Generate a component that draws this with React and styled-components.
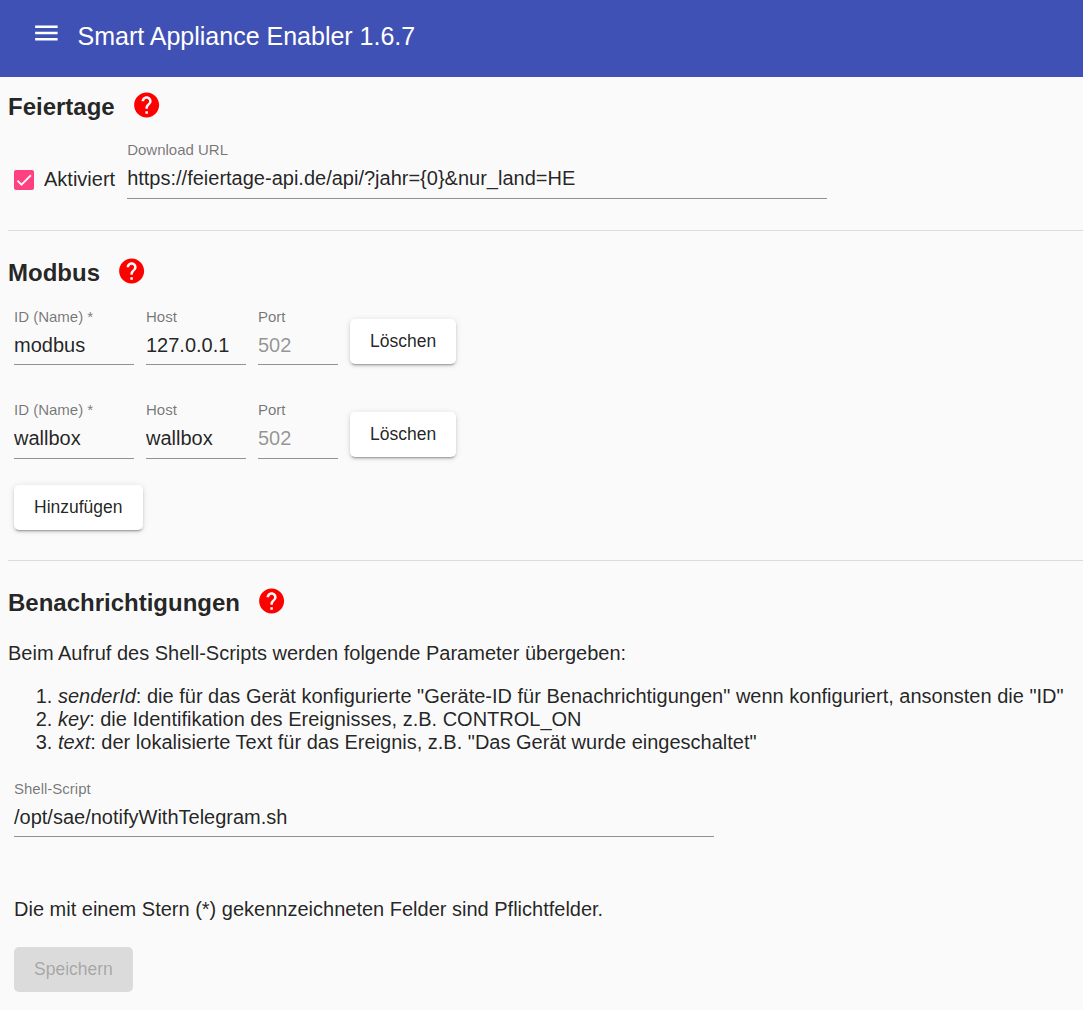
import React from 'react';
import styled, { createGlobalStyle } from 'styled-components';

const GlobalStyle = createGlobalStyle`
  *, *::before, *::after { box-sizing: border-box; }
  html, body { margin: 0; background: #fafafa; }
  body {
    overflow: hidden;
    color: rgba(0, 0, 0, 0.87);
    font-family: "Liberation Sans", Arial, sans-serif;
    font-size: 20px;
    line-height: 23px;
  }
`;

const Toolbar = styled.header`
  display: flex;
  align-items: flex-start;
  height: 77px;
  padding: 18px 31px 0;
  background: #3f51b5;
  color: #fff;
`;

const MenuButton = styled.button`
  display: flex;
  padding: 0;
  border: 0;
  background: none;
  color: inherit;
`;

const Title = styled.h1`
  margin: 4px 0 0 16.5px;
  font-size: 25px;
  font-weight: 400;
  line-height: 28px;
`;

const Section = styled.section`
  display: flex;
  flex-direction: column;
  align-items: flex-start;
  margin-left: 8px;
  height: ${(p) => p.$height}px;
  padding-top: ${(p) => p.$top}px;
  border-bottom: ${(p) => (p.$last ? 0 : 1)}px solid rgba(0, 0, 0, 0.12);
`;

const HeadingRow = styled.div`
  display: flex;
  align-items: flex-start;
  gap: 17px;
  height: 40px;
`;

const Heading = styled.h2`
  margin: 0;
  font-size: 24px;
  font-weight: 700;
  line-height: 40px;
`;

const HelpSvg = styled.svg`
  margin-top: 3px;
  fill: #f00;
`;

const Row = styled.div`
  display: flex;
  align-items: flex-start;
  gap: 12px;
  margin: ${(p) => p.$top}px 0 0 6px;
`;

const CheckboxLabel = styled.label`
  display: flex;
  align-items: center;
  gap: 10px;
  margin-top: 27px;
`;

const CheckboxBox = styled.span`
  display: flex;
  width: 20px;
  height: 20px;
  margin-top: 1px;
  border-radius: 2px;
  background: #ff4081;
`;

const Field = styled.label`
  display: flex;
  flex-direction: column;
  width: ${(p) => p.$width}px;
  padding-bottom: ${(p) => p.$pad}px;
  border-bottom: 1px solid rgba(0, 0, 0, 0.42);
`;

const FieldLabel = styled.span`
  margin-bottom: 9px;
  color: rgba(0, 0, 0, 0.54);
  font-size: 15px;
  line-height: 17px;
`;

const Input = styled.input`
  width: 100%;
  height: 23px;
  padding: 0;
  border: 0;
  outline: 0;
  background: none;
  color: inherit;
  font: inherit;
  &::placeholder { color: rgba(0, 0, 0, 0.42); opacity: 1; }
`;

const Button = styled.button`
  height: 45px;
  margin-top: ${(p) => p.$top || 0}px;
  padding: 0 20px;
  border: 0;
  border-radius: 5px;
  background: #fff;
  color: rgba(0, 0, 0, 0.87);
  font-family: inherit;
  font-size: 17.5px;
  line-height: 45px;
  box-shadow:
    0 3px 1.25px -2px rgba(0, 0, 0, 0.2),
    0 2px 2.5px 0 rgba(0, 0, 0, 0.14),
    0 1px 6px 0 rgba(0, 0, 0, 0.12);
  &:disabled {
    background: rgba(0, 0, 0, 0.12);
    color: rgba(0, 0, 0, 0.26);
    box-shadow: none;
  }
`;

const Intro = styled.p`
  margin: 19px 0 20px;
`;

const Parameters = styled.ol`
  margin: 0;
  padding-left: 50px;
  white-space: nowrap;
`;

const Note = styled.p`
  margin: 61px 0 26px 6px;
`;

function SectionHeading({ children }) {
  return (
    <HeadingRow>
      <Heading>{children}</Heading>
      <HelpSvg width="30" height="30" viewBox="0.3 0 24 24" aria-label="Hilfe">
        <path d="M12 2C6.48 2 2 6.48 2 12s4.48 10 10 10 10-4.48 10-10S17.52 2 12 2zm1 17h-2v-2h2v2zm2.07-7.75l-.9.92C13.45 12.9 13 13.5 13 15h-2v-.5c0-1.1.45-2.1 1.17-2.83l1.24-1.26c.37-.36.59-.86.59-1.41 0-1.1-.9-2-2-2s-2 .9-2 2H8c0-2.21 1.79-4 4-4s4 1.79 4 4c0 .88-.36 1.68-.93 2.25z" />
      </HelpSvg>
    </HeadingRow>
  );
}

function TextField({ label, width, value, placeholder, pad = 8 }) {
  return (
    <Field $width={width} $pad={pad}>
      <FieldLabel>{label}</FieldLabel>
      <Input type="text" defaultValue={value} placeholder={placeholder} spellCheck={false} />
    </Field>
  );
}

function ModbusRow({ id, host, top, pad }) {
  return (
    <Row $top={top}>
      <TextField label="ID (Name) *" width={120} value={id} pad={pad} />
      <TextField label="Host" width={100} value={host} pad={pad} />
      <TextField label="Port" width={80} placeholder="502" pad={pad} />
      <Button type="button" $top={11}>Löschen</Button>
    </Row>
  );
}

export default function App() {
  return (
    <>
      <GlobalStyle />
      <Toolbar>
        <MenuButton type="button" aria-label="Menü">
          <svg width="30" height="30" viewBox="-0.3 0 24 24" fill="currentColor">
            <path d="M3 18h18v-2H3v2zm0-5h18v-2H3v2zm0-7v2h18V6H3z" />
          </svg>
        </MenuButton>
        <Title>Smart Appliance Enabler 1.6.7</Title>
      </Toolbar>
      <main>
        <Section $top={10} $height={154}>
          <SectionHeading>Feiertage</SectionHeading>
          <Row $top={14}>
            <CheckboxLabel>
              <CheckboxBox>
                <svg width="20" height="20" viewBox="0 0 24 24" fill="none" stroke="#fafafa" strokeWidth="2.13">
                  <path d="M4.1 12.7L9 17.6 20.3 6.3" />
                </svg>
              </CheckboxBox>
              Aktiviert
            </CheckboxLabel>
            <TextField label="Download URL" width={700} value="https://feiertage-api.de/api/?jahr={0}&nur_land=HE" />
          </Row>
        </Section>
        <Section $top={22} $height={330}>
          <SectionHeading>Modbus</SectionHeading>
          <ModbusRow id="modbus" host="127.0.0.1" top={15} pad={7} />
          <ModbusRow id="wallbox" host="wallbox" top={36} pad={8} />
          <Row $top={26}>
            <Button type="button">Hinzufügen</Button>
          </Row>
        </Section>
        <Section $top={22} $height={449} $last>
          <SectionHeading>Benachrichtigungen</SectionHeading>
          <Intro>Beim Aufruf des Shell-Scripts werden folgende Parameter übergeben:</Intro>
          <Parameters>
            <li><i>senderId</i>: die für das Gerät konfigurierte "Geräte-ID für Benachrichtigungen" wenn konfiguriert, ansonsten die "ID"</li>
            <li><i>key</i>: die Identifikation des Ereignisses, z.B. CONTROL_ON</li>
            <li><i>text</i>: der lokalisierte Text für das Ereignis, z.B. "Das Gerät wurde eingeschaltet"</li>
          </Parameters>
          <Row $top={26}>
            <TextField label="Shell-Script" width={700} value="/opt/sae/notifyWithTelegram.sh" pad={7} />
          </Row>
          <Note>Die mit einem Stern (*) gekennzeichneten Felder sind Pflichtfelder.</Note>
          <Row $top={0}>
            <Button type="button" disabled>Speichern</Button>
          </Row>
        </Section>
      </main>
    </>
  );
}
